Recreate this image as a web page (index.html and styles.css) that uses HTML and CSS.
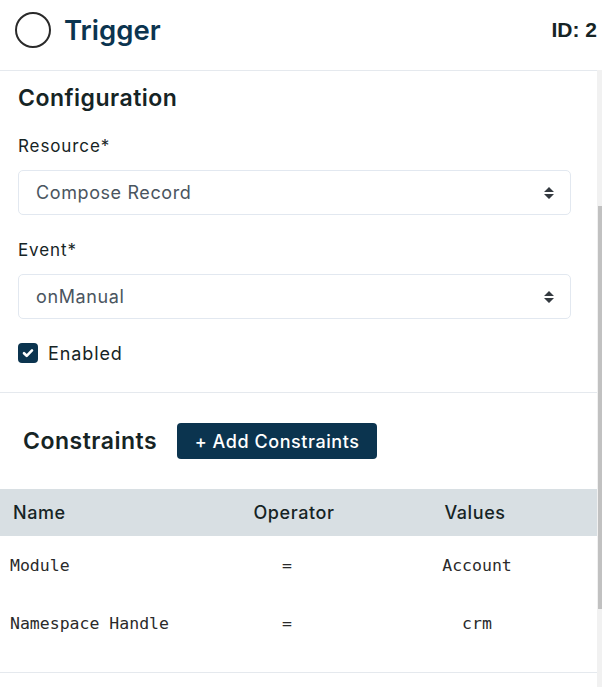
FILE: index.html
```html
<!DOCTYPE html>
<html lang="en">
<head>
<meta charset="utf-8">
<title>Trigger</title>
<link rel="stylesheet" href="styles.css">
</head>
<body>
<div class="app">
  <header class="top">
    <div class="title">
      <span class="circle"></span>
      <h1>Trigger</h1>
    </div>
    <div class="id">ID: 2</div>
  </header>
  <div class="body">
    <main class="content">
      <section class="config">
        <h2 class="sec-title">Configuration</h2>
        <div class="label">Resource*</div>
        <div class="select">
          <span>Compose Record</span>
          <svg class="sort" width="10" height="12" viewBox="0 0 10 12"><path d="M5 0 L10 5 H0 Z M0 7 H10 L5 12 Z" fill="#343a40"/></svg>
        </div>
        <div class="label label-next">Event*</div>
        <div class="select">
          <span>onManual</span>
          <svg class="sort" width="10" height="12" viewBox="0 0 10 12"><path d="M5 0 L10 5 H0 Z M0 7 H10 L5 12 Z" fill="#343a40"/></svg>
        </div>
        <div class="check">
          <span class="box"><svg width="12" height="10" viewBox="0 0 12 10"><path d="M2 5.2 L4.7 7.8 L10 2.4" fill="none" stroke="#fff" stroke-width="2.6" stroke-linecap="round" stroke-linejoin="round"/></svg></span>
          <span>Enabled</span>
        </div>
      </section>
      <section class="constraints">
        <div class="c-head">
          <h2 class="sec-title">Constraints</h2>
          <button class="btn">+ Add Constraints</button>
        </div>
        <div class="table">
          <div class="tr th">
            <div class="c-name">Name</div>
            <div class="c-op">Operator</div>
            <div class="c-val">Values</div>
            <div></div>
          </div>
          <div class="tr td">
            <div class="c-name">Module</div>
            <div class="c-op">=</div>
            <div class="c-val">Account</div>
            <div></div>
          </div>
          <div class="tr td">
            <div class="c-name">Namespace Handle</div>
            <div class="c-op">=</div>
            <div class="c-val">crm</div>
            <div></div>
          </div>
        </div>
      </section>
    </main>
    <div class="scrollbar"><div class="thumb"></div></div>
  </div>
</div>
</body>
</html>
```

FILE: styles.css
```css
* { box-sizing: border-box; }
html, body { margin: 0; padding: 0; background: #fff; }
body {
  font-family: "Inter", "Noto Sans", sans-serif;
  color: #162425;
}
.app {
  width: 602px;
  height: 687px;
  overflow: hidden;
  display: flex;
  flex-direction: column;
}
.top {
  height: 70px;
  flex: none;
  display: flex;
  align-items: center;
  justify-content: space-between;
  padding: 0 5px 10px 15px;
}
.title {
  display: flex;
  align-items: center;
  gap: 13px;
}
.circle {
  width: 36px;
  height: 36px;
  border: 2px solid #2a2a2a;
  border-radius: 50%;
  display: block;
}
h1 {
  margin: 0;
  font-size: 27.5px;
  font-weight: 600;
  line-height: 36px;
  color: #0b344f;
}
.id {
  font-family: "Liberation Sans", Arial, sans-serif;
  font-weight: 700;
  font-size: 21px;
  color: #162425;
}
.body {
  flex: 1;
  display: flex;
  min-height: 0;
}
.content {
  flex: 1;
  border-top: 1px solid #e5e9ee;
}
.scrollbar {
  width: 5px;
  flex: none;
  background: #f1f1f1;
  padding-top: 136px;
  display: flex;
  justify-content: flex-end;
}
.thumb {
  width: 4px;
  height: 403px;
  background: #c1c1c1;
}
.config {
  padding: 13px 26px 27px 18px;
  border-bottom: 1px solid #e5e9ee;
}
.sec-title {
  margin: 0;
  font-size: 23px;
  font-weight: 600;
  line-height: 28px;
  letter-spacing: 0.5px;
  color: #162425;
}
.label {
  margin-top: 22px;
  font-size: 17px;
  line-height: 24px;
  font-weight: 400;
  letter-spacing: 0.9px;
  color: #162425;
}
.label-next { margin-top: 23px; }
.select {
  margin-top: 12px;
  height: 45px;
  border: 1px solid #e2e8f0;
  border-radius: 5px;
  display: flex;
  align-items: center;
  justify-content: space-between;
  padding: 0 16px 0 17px;
  font-size: 18px;
  letter-spacing: 0.6px;
  color: #4a5560;
}
.check {
  margin-top: 22px;
  height: 24px;
  display: flex;
  align-items: center;
  gap: 10px;
  font-size: 18px;
  letter-spacing: 0.9px;
  color: #162425;
}
.box {
  width: 20px;
  height: 20px;
  border-radius: 4px;
  background: #0b344f;
  display: flex;
  align-items: center;
  justify-content: center;
}
.constraints {
  padding-top: 30px;
  border-bottom: 1px solid #e5e9ee;
  padding-bottom: 20px;
}
.c-head {
  display: flex;
  align-items: center;
  gap: 20px;
  padding-left: 23px;
}
.btn {
  height: 36px;
  width: 200px;
  border: none;
  border-radius: 4px;
  background: #0b344f;
  color: #fff;
  font-family: inherit;
  font-size: 18px;
  font-weight: 500;
  letter-spacing: 0.55px;
  padding: 0;
}
.table {
  margin-top: 30px;
}
.tr {
  display: grid;
  grid-template-columns: 200px 188px 174px 1fr;
  align-items: center;
}
.th {
  height: 47px;
  background: #d8dfe3;
  font-size: 18px;
  font-weight: 500;
  letter-spacing: 0.6px;
  color: #162425;
}
.td {
  height: 58px;
  font-family: "DejaVu Sans Mono", monospace;
  font-size: 16.5px;
  color: #2a2a2a;
}
.th .c-name { padding-left: 13px; }
.td .c-name { padding-left: 10px; }
.c-op, .c-val { text-align: center; }
.td .c-op { padding-right: 14px; }
.td .c-val { padding-left: 4px; }
```
